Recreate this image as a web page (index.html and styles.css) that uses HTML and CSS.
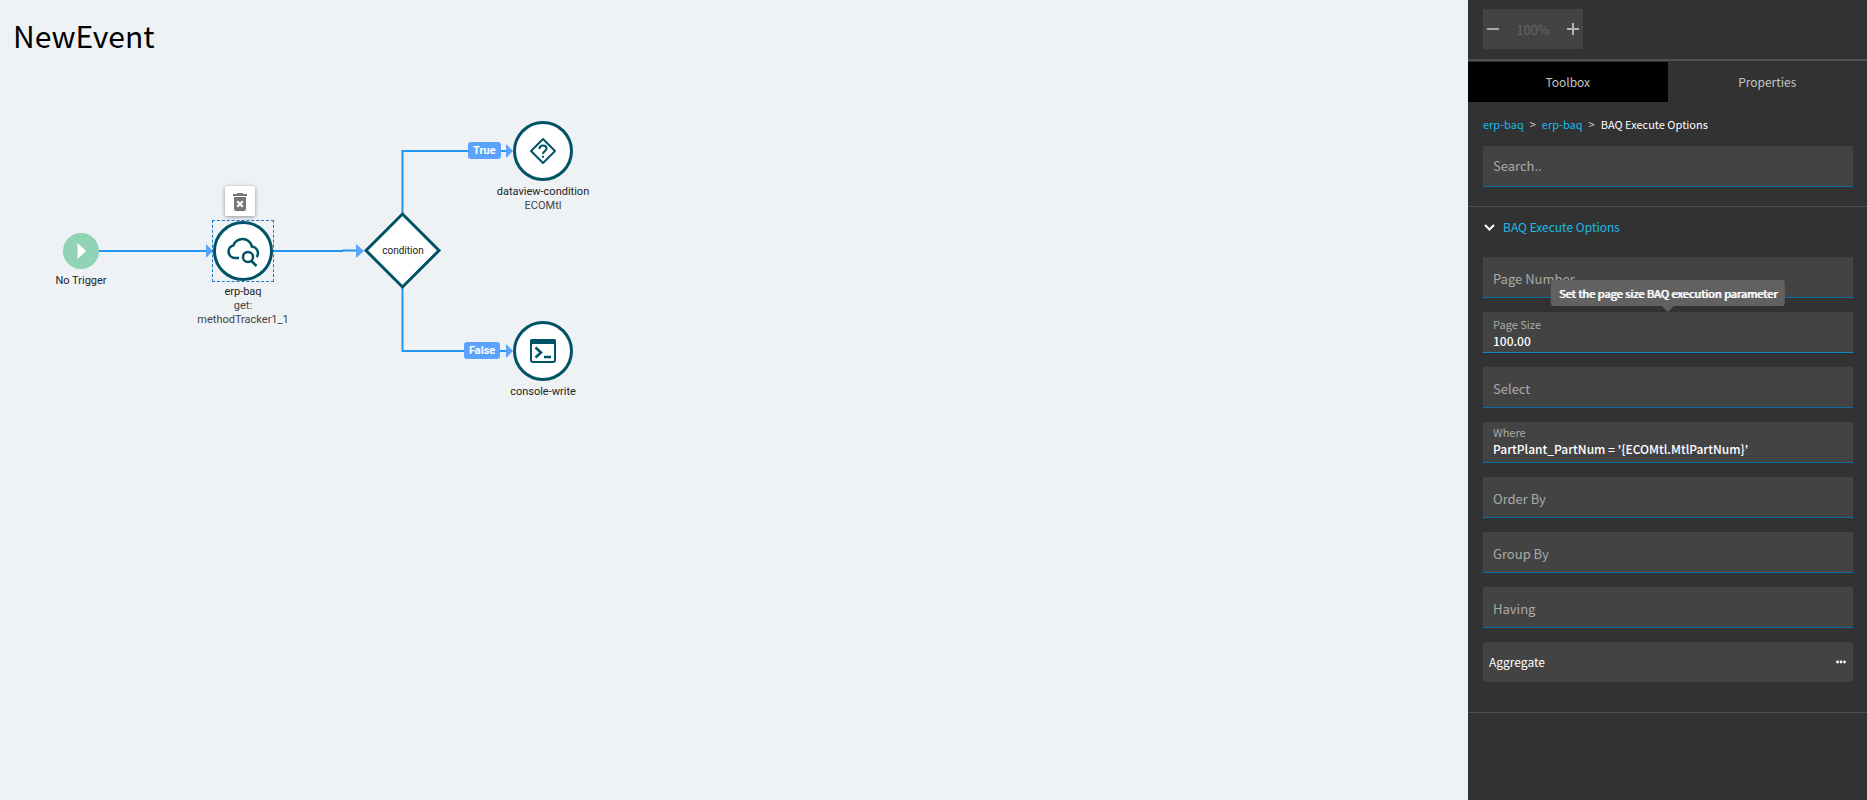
FILE: index.html
```html
<!DOCTYPE html>
<html lang="en">
<head>
<meta charset="utf-8">
<title>NewEvent</title>
<link rel="stylesheet" href="styles.css">
</head>
<body>
<div class="app">
  <main class="canvas">
    <h1 class="title">NewEvent</h1>
    <svg class="links" width="620" height="420" aria-hidden="true">
      <g class="wire">
        <path d="M99 251H208"/>
        <path d="M273 251H343"/>
        <path d="M342 250.500H358"/>
        <path d="M402.500 214V151H508"/>
        <path d="M402.500 287V351H508"/>
      </g>
      <g class="arrow">
        <path d="M206 244l7 7-7 7z"/>
        <path d="M356 244l8 7-8 7z"/>
        <path d="M506 144l7 7-7 7z"/>
        <path d="M506 344l7 7-7 7z"/>
      </g>
      <path class="diamond" d="M402.500 214L439 250.500L402.500 287L366 250.500z"/>
    </svg>

    <div class="node node-trigger">
      <svg width="36" height="36" viewBox="0 0 36 36" aria-hidden="true"><circle cx="18" cy="18" r="18" fill="#90d3b5"/><path d="M14.500 10v16l8.500-8z" fill="#fff"/></svg>
      <div class="caption spaced">No Trigger</div>
    </div>

    <div class="node node-baq">
      <div class="disc selected">
        <svg width="60" height="60" viewBox="0 0 60 60" aria-hidden="true">
          <circle class="ring" cx="30" cy="30" r="28.500"/>
          <path class="stroke medium" d="M26 37H22a6.500 6.500 0 0 1-1.500-12.800C21.500 20.500 25.500 18 29.500 18c4.500 0 8.500 3 9.300 7.500C42 26 45 28.500 45 32c0 1.600-.5 3-1.500 4M38.500 40L43.500 45"/>
          <circle class="stroke medium" cx="35" cy="36" r="5"/>
        </svg>
      </div>
      <div class="caption">erp-baq<span class="detail">get:<br>methodTracker1_1</span></div>
    </div>
    <button class="delete" type="button" aria-label="Delete">
      <svg width="14" height="18" viewBox="5 3 14 18" aria-hidden="true"><path fill="#757575" d="M6 19c0 1.100.9 2 2 2h8c1.100 0 2-.9 2-2V7H6v12zm2.460-7.120l1.410-1.410L12 12.590l2.120-2.120 1.410 1.410L13.410 14l2.120 2.120-1.410 1.410L12 15.410l-2.120 2.120-1.410-1.410L10.590 14l-2.130-2.120zM15.500 4l-1-1h-5l-1 1H5v2h14V4z"/></svg>
    </button>

    <div class="node node-condition"><div class="condition-label">condition</div></div>

    <div class="tag tag-true">True</div>
    <div class="tag tag-false">False</div>

    <div class="node node-dataview">
      <div class="disc">
        <svg width="60" height="60" viewBox="0 0 60 60" aria-hidden="true">
          <circle class="ring" cx="30" cy="30" r="28.500"/>
          <path class="stroke" stroke-linejoin="round" d="M30 18L42 30L30 42L18 30z"/>
          <path class="stroke" d="M26.500 28c0-2.300 1.500-3.500 3.500-3.500s3.500 1.200 3.500 3.200c0 2.300-3.500 2.600-3.500 5.300M30 34.800v2"/>
        </svg>
      </div>
      <div class="caption">dataview-condition<span class="detail">ECOMtl</span></div>
    </div>

    <div class="node node-console">
      <div class="disc">
        <svg width="60" height="60" viewBox="0 0 60 60" aria-hidden="true">
          <circle class="ring" cx="30" cy="30" r="28.500"/>
          <rect class="stroke" x="18" y="19" width="24" height="22" rx="2"/>
          <path d="M17 23v-3a2 2 0 0 1 2-2h22a2 2 0 0 1 2 2v3z" fill="#005365"/>
          <path class="stroke medium" d="M22.500 26.500l5.500 5-5.500 5M31 36h7"/>
        </svg>
      </div>
      <div class="caption">console-write</div>
    </div>
  </main>

  <aside class="panel">
    <header class="toolbar">
      <div class="zoom">
        <button class="zoom-button" type="button" aria-label="Zoom out"><svg width="12" height="12" aria-hidden="true"><path d="M0 6H12" stroke="#a9a9a9" stroke-width="2"/></svg></button>
        <span class="zoom-value">100%</span>
        <button class="zoom-button" type="button" aria-label="Zoom in"><svg width="12" height="12" aria-hidden="true"><path d="M0 6H12M6 0V12" stroke="#b4b4b4" stroke-width="2"/></svg></button>
      </div>
    </header>
    <div class="tabs" role="tablist">
      <button class="tab active" type="button" role="tab" aria-selected="true">Toolbox</button>
      <button class="tab" type="button" role="tab" aria-selected="false">Properties</button>
    </div>
    <div class="search">
      <nav class="crumbs"><a href="#">erp-baq</a><span class="sep">&gt;</span><a href="#">erp-baq</a><span class="sep">&gt;</span><span class="current">BAQ Execute Options</span></nav>
      <div class="field"><input class="input" type="text" placeholder="Search.." aria-label="Search"></div>
    </div>
    <section class="options">
      <button class="section-toggle" type="button" aria-expanded="true"><svg width="11" height="7" viewBox="0 0 11 7" aria-hidden="true"><path d="M1 1L5.500 5.500L10 1" fill="none" stroke="#fff" stroke-width="2"/></svg><span>BAQ Execute Options</span></button>
      <form class="fields">
        <div class="field"><input class="input low" type="text" placeholder="Page Number" aria-label="Page Number"></div>
        <div class="field filled focused">
          <label class="label" for="page-size">Page Size</label>
          <input class="input" id="page-size" type="text" value="100.00">
          <div class="tooltip" role="tooltip">Set the page size BAQ execution parameter</div>
        </div>
        <div class="field"><input class="input low" type="text" placeholder="Select" aria-label="Select"></div>
        <div class="field filled tight">
          <label class="label" for="where">Where</label>
          <input class="input" id="where" type="text" value="PartPlant_PartNum = '{ECOMtl.MtlPartNum}'">
        </div>
        <div class="field"><input class="input low" type="text" placeholder="Order By" aria-label="Order By"></div>
        <div class="field"><input class="input low" type="text" placeholder="Group By" aria-label="Group By"></div>
        <div class="field"><input class="input low" type="text" placeholder="Having" aria-label="Having"></div>
        <button class="aggregate" type="button"><span>Aggregate</span><svg width="10" height="4" viewBox="0 0 10 4" aria-hidden="true"><g fill="#fff"><circle cx="1.500" cy="2" r="1.400"/><circle cx="5" cy="2" r="1.400"/><circle cx="8.500" cy="2" r="1.400"/></g></svg></button>
      </form>
    </section>
  </aside>
</div>
</body>
</html>
```
FILE: styles.css
```css
* { box-sizing: border-box; }
body { margin: 0; font-family: "Noto Sans CJK SC", "Noto Sans", sans-serif; font-size: 13px; }
button, input { font: inherit; border: 0; margin: 0; padding: 0; background: none; color: inherit; }
.app { display: flex; min-height: 100vh; }

.canvas { position: relative; flex: 1; background: #eef2f5; font-family: Roboto, sans-serif; }
.title { margin: 0; padding: 14px 13px; font: 400 30px/42px "Noto Sans CJK SC", "Noto Sans", sans-serif; color: #000; }
.links { position: absolute; left: 0; top: 0; }
.wire { fill: none; stroke: #2196f3; stroke-width: 2; }
.arrow { fill: #5ba3fc; }
.diamond { fill: #fff; stroke: #005365; stroke-width: 3; }

.node { position: absolute; display: flex; flex-direction: column; align-items: center; width: 120px; }
.node-trigger { left: 21px; top: 233px; }
.node-baq { left: 183px; top: 220px; }
.node-condition { left: 343px; top: 244px; }
.node-dataview { left: 483px; top: 120px; }
.node-console { left: 483px; top: 320px; }
.disc { display: flex; border: 1px solid transparent; }
.disc.selected { border: 1px dashed #1976d2; }
.ring { fill: #fff; stroke: #005365; stroke-width: 3; }
.stroke { fill: none; stroke: #005365; stroke-width: 2; }
.medium { stroke-width: 2.5; }
.caption { padding-top: 3px; font-size: 11px; line-height: 14px; color: #222; text-align: center; }
.caption.spaced { padding-top: 5px; }
.detail { display: block; color: #444; }
.condition-label { font-size: 10px; line-height: 14px; color: #222; }
.delete { position: absolute; left: 225px; top: 186px; display: flex; align-items: center; justify-content: center; width: 30px; height: 30px; padding-top: 2px; background: #fff; border-radius: 2px; box-shadow: 0 1px 4px rgba(0, 0, 0, .4); }
.tag { position: absolute; padding: 0 5px; border-radius: 3px; background: #5ba3fc; color: #fff; font-size: 11px; font-weight: 700; line-height: 17px; }
.tag-true { left: 468px; top: 142px; }
.tag-false { left: 464px; top: 342px; }

.panel { width: 399px; background: #323232; color: #fff; }
.toolbar { padding: 9px 15px 10px; border-bottom: 2px solid #505050; }
.zoom { display: flex; align-items: center; justify-content: space-between; width: 100px; height: 40px; padding: 0 4px; background: #434343; }
.zoom-button { display: flex; }
.zoom-value { color: #636363; }
.tabs { display: flex; padding-top: 1px; }
.tab { flex: 1; height: 40px; padding-bottom: 2px; color: #c4c4c4; font-size: 12px; }
.tab.active { background: #000; }
.search { padding: 13px 14px 19px 15px; border-bottom: 1px solid #505050; }
.crumbs { display: flex; gap: 6px; margin-bottom: 13px; font-size: 11px; line-height: 18px; }
.crumbs a { color: #19b9ea; text-decoration: none; }
.sep { color: #d0d0d0; }
.field { position: relative; display: flex; flex-direction: column; height: 41px; background: #434343; border-bottom: 1px solid #0b6da3; }
.input { flex: 1; width: 100%; min-height: 0; padding: 0 10px 2px; outline: 0; }
.input.low { padding: 2px 10px 0; }
.input::placeholder { color: #aaa; opacity: 1; }
.filled { padding: 4px 0 3px; }
.filled.tight { padding: 2px 0 5px; }
.filled .input { padding: 0 10px; font-size: 12px; font-weight: 500; }
.label { padding-left: 10px; font-size: 11px; line-height: 16px; color: #aaa; }
.focused { border-color: #1187cd; }
.tooltip { position: absolute; bottom: 46px; left: 50%; transform: translateX(-50%); padding: 0 8px; border-radius: 3px; background: #616161; font-size: 11px; line-height: 26px; white-space: nowrap; text-shadow: 1px 0 0 #fff; }
.tooltip::after { content: ""; position: absolute; top: 100%; left: 50%; margin-left: -6px; border: 6px solid transparent; border-bottom: 0; border-top-color: #616161; }
.options { padding: 10px 14px 30px 15px; border-bottom: 1px solid #505050; }
.section-toggle { display: flex; align-items: center; gap: 8px; height: 20px; padding-left: 1px; margin-bottom: 20px; color: #19b9ea; font-size: 12px; }
.section-toggle span, .aggregate span { padding-bottom: 2px; }
.fields { display: flex; flex-direction: column; gap: 14px; }
.aggregate { display: flex; align-items: center; justify-content: space-between; height: 40px; padding: 0 7px 0 6px; border-radius: 3px; background: #434343; font-size: 12px; }
```
